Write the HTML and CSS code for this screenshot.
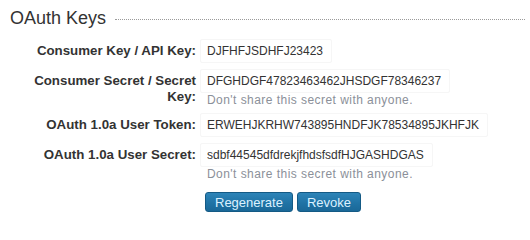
FILE: index.html
```html
<!DOCTYPE html>
<html>
<head>
<meta charset="utf-8">
<link rel="stylesheet" href="styles.css">
</head>
<body>
<div class="section">
  <div class="heading">
    <h2 class="title">OAuth Keys</h2>
    <div class="rule"></div>
  </div>
  <div class="row">
    <div class="label">Consumer Key / API Key:</div>
    <div class="field">
      <div class="value">DJFHFJSDHFJ23423</div>
    </div>
  </div>
  <div class="row">
    <div class="label">Consumer Secret / Secret Key:</div>
    <div class="field">
      <div class="value">DFGHDGF47823463462JHSDGF78346237</div>
      <div class="hint">Don't share this secret with anyone.</div>
    </div>
  </div>
  <div class="row">
    <div class="label">OAuth 1.0a User Token:</div>
    <div class="field">
      <div class="value">ERWEHJKRHW743895HNDFJK78534895JKHFJK</div>
    </div>
  </div>
  <div class="row">
    <div class="label">OAuth 1.0a User Secret:</div>
    <div class="field">
      <div class="value">sdbf44545dfdrekjfhdsfsdfHJGASHDGAS</div>
      <div class="hint">Don't share this secret with anyone.</div>
    </div>
  </div>
  <div class="actions">
    <button class="btn">Regenerate</button>
    <button class="btn">Revoke</button>
  </div>
</div>
</body>
</html>
```
FILE: styles.css
```css
html, body {
  margin: 0;
  padding: 0;
  background: #ffffff;
}
body {
  font-family: "Liberation Sans", Arial, sans-serif;
  color: #333333;
}
.section {
  padding: 8px 5px 0 10px;
}
.heading {
  display: flex;
  align-items: center;
  gap: 9px;
  margin-bottom: 10px;
}
.title {
  margin: 0;
  font-size: 18px;
  font-weight: normal;
  line-height: 21px;
  color: #333333;
}
.rule {
  flex: 1;
  border-top: 1px dotted #9a9a9a;
  margin-top: 1px;
}
.row {
  display: grid;
  grid-template-columns: 186px 1fr;
  column-gap: 4px;
  margin-bottom: 6px;
}
.label {
  text-align: right;
  font-size: 13.3px;
  font-weight: bold;
  line-height: 16px;
  padding-top: 4px;
  color: #333333;
}
.field {
  display: flex;
  flex-direction: column;
  align-items: flex-start;
}
.value {
  font-size: 12px;
  line-height: 16px;
  padding: 3px 8px 3px 6px;
  border: 1px solid #f6f6f6;
  border-radius: 2px;
  color: #333333;
}
.hint {
  font-size: 12px;
  letter-spacing: 0.45px;
  line-height: 14px;
  color: #8b9099;
  padding-left: 7px;
}
.actions {
  padding-left: 195px;
  padding-top: 5px;
  display: flex;
  gap: 4px;
}
.btn {
  font-family: "Liberation Sans", Arial, sans-serif;
  font-size: 13px;
  color: #dcf1ff;
  height: 20px;
  padding: 0 9px;
  border: 1px solid #145a85;
  border-radius: 3px;
  background: linear-gradient(#2d84b8, #1f72a4 60%, #1a6898);
}
```
